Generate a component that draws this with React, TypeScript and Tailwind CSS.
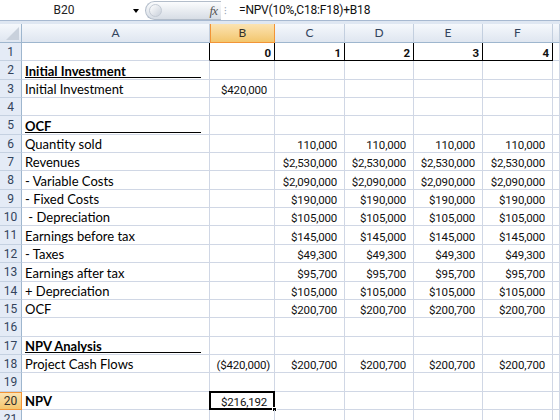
import clsx from "clsx";

type Row = {
  a?: string;
  bold?: boolean;
  line?: boolean;
  b?: string;
  rest?: string[];
};

const money = (v: string) => [v, v, v, v];

const rows: Row[] = [
  { b: "0", rest: ["1", "2", "3", "4"], bold: true },
  { a: "Initial Investment", bold: true, line: true },
  { a: "Initial Investment", b: "$420,000" },
  {},
  { a: "OCF", bold: true, line: true },
  { a: "Quantity sold", rest: money("110,000") },
  { a: "Revenues", rest: money("$2,530,000") },
  { a: "- Variable Costs", rest: money("$2,090,000") },
  { a: "- Fixed Costs", rest: money("$190,000") },
  { a: "\u00a0- Depreciation", rest: money("$105,000") },
  { a: "Earnings before tax", rest: money("$145,000") },
  { a: "- Taxes", rest: money("$49,300") },
  { a: "Earnings after tax", rest: money("$95,700") },
  { a: "+ Depreciation", rest: money("$105,000") },
  { a: "OCF", rest: money("$200,700") },
  {},
  { a: "NPV Analysis", bold: true, line: true },
  { a: "Project Cash Flows", b: "($420,000)", rest: money("$200,700") },
  {},
  { a: "NPV", bold: true, b: "$216,192" },
  {},
];

const cols = ["C", "D", "E", "F"];

const cell = "border-r border-b border-[#d0d7e5] flex items-end pb-[1px] whitespace-nowrap leading-none";
const num = "justify-end font-['Roboto',_sans-serif] text-[11.5px] tracking-[-0.2px] text-[#111]";

function ColHead({ label, active }: { label: string; active?: boolean }) {
  return (
    <div
      className={clsx(
        "flex items-center justify-center text-[12px] border-b",
        active
          ? "bg-gradient-to-b from-[#fbe3b2] to-[#f3c66c] border-x border-[#f29436] text-[#33302a]"
          : "bg-gradient-to-b from-[#f5f8fc] to-[#dfe6f0] border-r border-r-[#c3cfdf] border-b-[#9eb6ce] text-[#33445c]"
      )}
    >
      {label}
    </div>
  );
}

function RowHead({ n, active }: { n: number; active?: boolean }) {
  return (
    <div
      className={clsx(
        "flex items-center justify-center font-['Roboto',_sans-serif] text-[12px] border-r border-b",
        active
          ? "bg-gradient-to-b from-[#fbe3b2] to-[#f3c66c] border-[#f29436] border-t text-[#33302a]"
          : "bg-[#e4ebf6] border-r-[#9eb6ce] border-b-[#c5d1e1] text-[#33445c]"
      )}
    >
      {n}
    </div>
  );
}

export default function App() {
  return (
    <div className="w-[560px] h-[420px] overflow-hidden bg-white font-['Lato',_sans-serif] text-black">
      {/* formula bar */}
      <div className="h-[21px] flex border-b border-[#a7b9d1] bg-white">
        <div className="w-[145px] flex items-center relative">
          <span className="w-[128px] text-center font-['Roboto',_sans-serif] text-[12px] text-[#222]">B20</span>
          <span className="absolute left-[133px] top-[9px] w-0 h-0 border-x-[3.5px] border-x-transparent border-t-[4px] border-t-black" />
        </div>
        <div className="w-[76px] mt-[1px] rounded-l-full border border-r-0 border-[#b3bdca] bg-gradient-to-b from-[#fbfcfd] to-[#d7dde5] flex items-center justify-between pl-[3px] pr-[4px]">
          <span className="w-[13px] h-[13px] rounded-full bg-gradient-to-br from-[#ffffff] to-[#c9d0da] border border-[#c3cad4]" />
          <span className="text-[13px] italic font-['Liberation_Serif',_serif] text-[#555] tracking-[-1px]">fx</span>
        </div>
        <div className="w-[9px] flex items-center justify-center">
          <span className="text-[10px] text-[#9aa6b6] leading-none">⁝</span>
        </div>
        <div className="flex-1 flex items-center pl-[9px] font-['Roboto',_sans-serif] text-[12px] tracking-[-0.2px] text-[#111]">
          =NPV(10%,C18:F18)+B18
        </div>
      </div>
      <div className="h-[3px] bg-[#dfe7f2]" />

      <div className="grid grid-cols-[22px_188px_65px_70px_69px_69px_70px_1fr] grid-rows-[19px_18px_19px_18px_18px_19px_18px_18px_19px_18px_18px_19px_18px_19px_18px_18px_19px_18px_18px_19px_18px_18px] text-[13px]">
        {/* header row */}
        <div className="bg-gradient-to-b from-[#f5f8fc] to-[#dfe6f0] border-r border-b border-[#9eb6ce] relative">
          <svg className="absolute right-[2px] bottom-[2px]" width="13" height="13" viewBox="0 0 13 13">
            <polygon points="13,0 13,13 0,13" fill="#c9d1dc" />
          </svg>
        </div>
        <ColHead label="A" />
        <ColHead label="B" active />
        {cols.map((c) => (
          <ColHead key={c} label={c} />
        ))}
        <ColHead label="" />

        {rows.map((r, i) => {
          const n = i + 1;
          const first = n === 1;
          return (
            <div key={n} className="contents">
              <RowHead n={n} active={n === 20} />
              <div className={clsx(cell, "relative pl-[3px]", r.bold && "font-bold", first && "border-r-black")}>
                {r.a}
                {r.line && <span className="absolute left-[3px] right-[8px] bottom-[1px] h-px bg-black" />}
              </div>
              <div
                className={clsx(
                  cell,
                  num,
                  "relative",
                  first ? "border-black pr-[3px] font-bold" : r.b?.startsWith("(") ? "pr-[4px]" : "pr-[7px]"
                )}
              >
                {r.b}
                {n === 20 && (
                  <>
                    <span className="absolute -left-[1px] -top-[1px] right-[-1px] bottom-[-1px] border-2 border-black" />
                    <span className="absolute right-[-3px] bottom-[-3px] w-[5px] h-[5px] bg-black border border-white" />
                  </>
                )}
              </div>
              {cols.map((c, j) => (
                <div
                  key={c}
                  className={clsx(cell, num, first ? "border-black pr-[3px] font-bold" : "pr-[7px]")}
                >
                  {r.rest?.[j]}
                </div>
              ))}
              <div className={cell} />
            </div>
          );
        })}
      </div>
    </div>
  );
}
